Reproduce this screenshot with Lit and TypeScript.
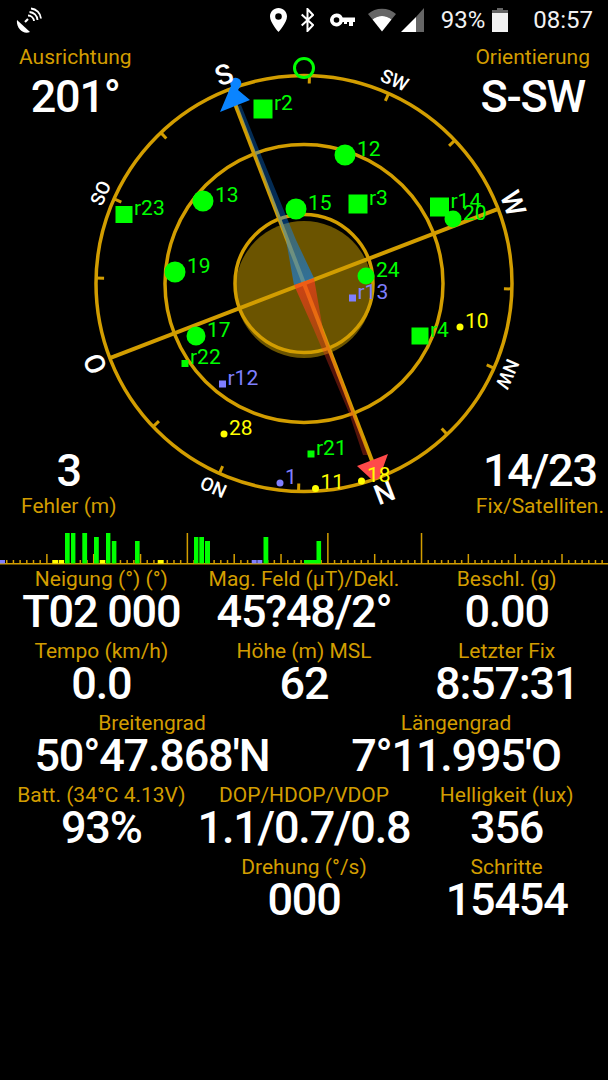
import { LitElement, html, css, svg } from "lit";
import { customElement } from "lit/decorators.js";

const GOLD = "#d29d00";
const GREEN = "#00ff00";
const YELLOW = "#ffff00";
const BLUE = "#7f7fff";
const CX = 304;
const CY = 283.5;
const HEADING = 201;

type Sat = { l: string; x: number; y: number; s: number; c: string; sq?: boolean };
const sats: Sat[] = [
  { l: "12", x: 345, y: 155, s: 10.5, c: GREEN },
  { l: "13", x: 203, y: 201, s: 10.5, c: GREEN },
  { l: "15", x: 296, y: 209, s: 10.5, c: GREEN },
  { l: "19", x: 175, y: 272, s: 10.5, c: GREEN },
  { l: "24", x: 366, y: 276, s: 8.5, c: GREEN },
  { l: "17", x: 196, y: 336, s: 9.5, c: GREEN },
  { l: "r2", x: 263, y: 109, s: 9.5, c: GREEN, sq: true },
  { l: "r3", x: 358, y: 204, s: 9.5, c: GREEN, sq: true },
  { l: "r14", x: 439.5, y: 207, s: 9.5, c: GREEN, sq: true },
  { l: "20", x: 453, y: 219, s: 8.5, c: GREEN },
  { l: "r23", x: 124, y: 214.5, s: 8.5, c: GREEN, sq: true },
  { l: "r4", x: 420, y: 336, s: 8.5, c: GREEN, sq: true },
  { l: "r22", x: 185, y: 363.5, s: 3.5, c: GREEN, sq: true },
  { l: "r21", x: 311, y: 454, s: 3.5, c: GREEN, sq: true },
  { l: "r13", x: 352.5, y: 298, s: 3.5, c: BLUE, sq: true },
  { l: "r12", x: 222.5, y: 384, s: 3.5, c: BLUE, sq: true },
  { l: "28", x: 224, y: 434, s: 3.5, c: YELLOW },
  { l: "10", x: 460, y: 327, s: 3.5, c: YELLOW },
  { l: "11", x: 315.5, y: 488.5, s: 3.5, c: YELLOW },
  { l: "1", x: 280, y: 483, s: 3.5, c: BLUE },
];

const dirs: [string, number, number, number][] = [
  ["S", 180, 28, 214],
  ["W", 270, 28, 214],
  ["N", 360, 28, 214],
  ["O", 90, 28, 214],
  ["SW", 225, 19, 216],
  ["NW", 315, 19, 216],
  ["NO", 45, 19, 216],
  ["SO", 135, 19, 216],
];

const bars: [number, number, string, number][] = [
  [65, 533, GREEN, 4.7], [71, 533, GREEN, 4.4], [82.3, 533, GREEN, 4.8], [94, 537, GREEN, 4.8],
  [106, 533, GREEN, 4.4], [111.8, 541, GREEN, 4.6], [135, 541, GREEN, 4.6], [194, 537, GREEN, 4.4],
  [199.3, 537, GREEN, 4.7], [205, 541, GREEN, 5], [263.5, 537, GREEN, 4.8], [316.5, 541, GREEN, 4.6],
  [0, 560, BLUE, 5], [52.3, 560, YELLOW, 5.7], [58.7, 560, YELLOW, 5.4], [100, 560, YELLOW, 5.3],
  [157.7, 560, YELLOW, 6], [251.7, 560, BLUE, 5], [257.3, 560, BLUE, 5], [304, 560, GREEN, 13],
];

const cells: [string, string, number][] = [
  ["Neigung (°) (°)", "T02 000", 2],
  ["Mag. Feld (µT)/Dekl.", "45?48/2°", 2],
  ["Beschl. (g)", "0.00", 2],
  ["Tempo (km/h)", "0.0", 2],
  ["Höhe (m) MSL", "62", 2],
  ["Letzter Fix", "8:57:31", 2],
  ["Breitengrad", "50°47.868'N", 3],
  ["Längengrad", "7°11.995'O", 3],
  ["Batt. (34°C 4.13V)", "93%", 2],
  ["DOP/HDOP/VDOP", "1.1/0.7/0.8", 2],
  ["Helligkeit (lux)", "356", 2],
];
const lastRow: [string, string][] = [
  ["Drehung (°/s)", "000"],
  ["Schritte", "15454"],
];

@customElement("app-root")
export class AppRoot extends LitElement {
  static styles = css`
    :host { display: block; width: 608px; height: 1080px; background: #000; color: #fff; font-family: Roboto, "Liberation Sans", sans-serif; overflow: hidden; }
    .status { height: 38px; display: flex; align-items: center; padding: 2px 15px 0 16px; box-sizing: border-box; font-size: 24px; color: #f2f2f2; }
    .status svg { display: block; flex: none; }
    .spacer { flex: 1; }
    .ml-pin { margin-right: 14px; }
    .ml-bt { margin-right: 16px; }
    .ml-key { margin-right: 13px; }
    .ml-wifi { margin-right: 5px; }
    .ml-sig { margin-right: 17px; }
    .batt-pct { margin-right: 7px; }
    .ml-batt { margin-right: 25px; }
    .sky { display: grid; height: 492px; grid-template-columns: 1fr 1fr; grid-template-rows: 1fr 1fr; }
    .sky > * { grid-row: 1 / 3; grid-column: 1 / 3; }
    .sky svg.plot { display: block; width: 608px; height: 525px; margin-top: -38px; z-index: 1; }
    .corner { z-index: 2; display: flex; flex-direction: column; align-items: center; width: max-content; }
    .tl { justify-self: start; align-self: start; margin: 7px 0 0 19px; }
    .tr { justify-self: end; align-self: start; margin: 7px 18px 0 0; }
    .tl .val, .tr .val { margin-top: 7px; }
    .bl { justify-self: start; align-self: end; margin: 0 0 12px 21px; }
    .br { justify-self: end; align-self: end; margin: 0 4px 12px 0; }
    .bl .val, .br .val { margin-bottom: 2px; }
    .lbl { font-size: 21px; line-height: 24px; color: #d29d00; white-space: nowrap; }
    .val { font-size: 45px; line-height: 42px; letter-spacing: -1.2px; font-weight: 500; white-space: nowrap; color: #fff; }
    .chart { display: block; width: 608px; height: 36px; }
    .grid { display: grid; grid-template-columns: repeat(6, 1fr); grid-auto-rows: 72px; padding-top: 1px; }
    .cell { display: flex; flex-direction: column; align-items: center; white-space: nowrap; min-width: 0; }
    .s2 { grid-column: span 2; }
    .s3 { grid-column: span 3; }
    .empty { grid-column: span 2; }
    .txt-sat { font-size: 21px; font-family: Roboto, "Liberation Sans", sans-serif; }
  `;

  private pol(bearing: number, r: number): [number, number] {
    const t = ((bearing - HEADING) * Math.PI) / 180;
    return [CX + Math.sin(t) * r, CY - Math.cos(t) * r];
  }

  private plot() {
    const ticks = [];
    for (let i = 0; i < 16; i++) {
      const b = i * 22.5;
      const [x1, y1] = this.pol(b, 209);
      const [x2, y2] = this.pol(b, 200);
      ticks.push(svg`<line x1=${x1} y1=${y1} x2=${x2} y2=${y2} stroke=${GOLD} stroke-width="3"/>`);
    }
    const [sx, sy] = this.pol(180, 208);
    const [nx, ny] = this.pol(0, 208);
    const [wx, wy] = this.pol(270, 208);
    const [ox, oy] = this.pol(90, 208);
    return svg`
      <defs>
        <linearGradient id="gb" gradientUnits="userSpaceOnUse" x1="240" y1="105" x2="304" y2="283">
          <stop offset="0" stop-color="#0a84ff" stop-opacity="0.33"/>
          <stop offset="0.55" stop-color="#0a84ff" stop-opacity="0.33"/>
          <stop offset="1" stop-color="#0a84ff" stop-opacity="0.6"/>
        </linearGradient>
        <linearGradient id="gr" gradientUnits="userSpaceOnUse" x1="365" y1="455" x2="304" y2="283">
          <stop offset="0" stop-color="#ff3a20" stop-opacity="0.33"/>
          <stop offset="0.6" stop-color="#ff3a20" stop-opacity="0.33"/>
          <stop offset="1" stop-color="#ff3a20" stop-opacity="0.65"/>
        </linearGradient>
      </defs>
      <circle cx=${CX} cy="289.5" r="68.5" fill="#6b5400"/>
      <circle cx=${CX} cy=${CY} r="208" fill="none" stroke=${GOLD} stroke-width="3.5"/>
      <circle cx=${CX} cy=${CY} r="139" fill="none" stroke=${GOLD} stroke-width="3.5"/>
      <circle cx=${CX} cy=${CY} r="69" fill="none" stroke=${GOLD} stroke-width="3.5"/>
      ${ticks}
      <line x1=${sx} y1=${sy} x2=${nx} y2=${ny} stroke=${GOLD} stroke-width="4"/>
      <line x1=${wx} y1=${wy} x2=${ox} y2=${oy} stroke=${GOLD} stroke-width="4"/>
      <polygon points="237,106 255,153 286,240 294,285 314,278 296,240 259,150 241,105" fill="url(#gb)"/>
      <polygon points="294,285 314,330 349,413 363,455 368,455 354,413 323,330 314,278" fill="url(#gr)"/>
      <path d="M220 112 L231 86 A5.5 5.5 0 1 1 241 85 L238 90 L250 100 Z" fill="#0a84ff"/>
      <path d="M357 466 L388 454 L380 476 A6.5 6.5 0 0 1 369 477 Z" fill="#ff4a4a"/>
      ${dirs.map(([t, b, fs, r]) => {
        const [x, y] = this.pol(b, r);
        return svg`<text x=${x} y=${y} font-size=${fs} fill="#fff" text-anchor="middle" font-weight="500" transform="rotate(${b - HEADING} ${x} ${y})">${t}</text>`;
      })}
      <circle cx="304" cy="68" r="9.5" fill="none" stroke=${GREEN} stroke-width="3"/>
      ${sats.map((s) => svg`
        ${s.sq
          ? svg`<rect x=${s.x - s.s} y=${s.y - s.s} width=${2 * s.s} height=${2 * s.s} fill=${s.c}/>`
          : svg`<circle cx=${s.x} cy=${s.y} r=${s.s} fill=${s.c}/>`}
        <text class="txt-sat" x=${s.x + s.s + 1.5} y=${s.y + 0.5} fill=${s.c}>${s.l}</text>
      `)}
      <circle cx="361.5" cy="481" r="3.5" fill=${YELLOW}/>
      <text class="txt-sat" x="367" y="482" fill=${YELLOW}>18</text>
    `;
  }

  private chart() {
    const t = [];
    for (let i = 0; i < 91; i++) {
      const x = i * 6.69 - 0.7;
      const tall = i === 28 || i === 49 || i === 63;
      const h = tall ? 30 : i % 7 === 0 && i > 0 ? 9 : 3;
      t.push(svg`<rect x=${x} y=${33 - h} width="1.5" height=${h} fill=${GOLD}/>`);
    }
    return svg`
      <rect x="0" y="33" width="608" height="1.5" fill=${GOLD}/>
      ${t}
      ${bars.map(([x, top, c, w]) => svg`<rect x=${x} y=${top - 530} width=${w} height=${563.5 - top} fill=${c}/>`)}
    `;
  }

  render() {
    return html`
      <div class="status">
        <svg width="26" height="26" viewBox="0 0 26 26" fill="none" stroke="#fff">
          <path d="M1 13 L14 25 C7 28 0 21 1 13Z" fill="#fff" stroke="none"/>
          <path d="M9 15 L12 12" stroke-width="2.2"/>
          <path d="M12 8.500 A6 6 0 0 1 18 14" stroke-width="1.8"/>
          <path d="M13.500 5 A8.500 8.500 0 0 1 21.500 13" stroke-width="1.8"/>
          <path d="M15 1.500 A11 11 0 0 1 25 11.500" stroke-width="1.8"/>
        </svg>
        <div class="spacer"></div>
        <svg class="ml-pin" width="17" height="24" viewBox="0 0 17 24"><path fill-rule="evenodd" fill="#fff" d="M8.500 0 C3.700 0 0 3.700 0 8.500 C0 14.500 8.500 24 8.500 24 S17 14.500 17 8.500 C17 3.700 13.300 0 8.500 0Z M8.500 5.200 A3.300 3.300 0 1 1 8.500 11.800 A3.300 3.300 0 1 1 8.500 5.200Z"/></svg>
        <svg class="ml-bt" width="13" height="24" viewBox="0 0 13 24" fill="none" stroke="#fff" stroke-width="2"><path d="M.7 6.500 L12 17 L6.500 23 V1 L12 7 L.7 17.500"/></svg>
        <svg class="ml-key" width="25" height="14" viewBox="0 0 25 14"><path fill-rule="evenodd" fill="#fff" d="M6.500 .5 A6.500 6.500 0 0 1 12.700 4.500 H25 V9 H23 V13 H19 V9 H17 V11 H14 V9 H12.700 A6.500 6.500 0 1 1 6.500 .5Z M6.500 4.200 A2.800 2.800 0 1 0 6.500 9.800 A2.800 2.800 0 1 0 6.500 4.200Z"/></svg>
        <svg class="ml-wifi" width="28" height="24" viewBox="0 0 28 24"><path d="M0 6 A21 21 0 0 1 28 6 L23.500 11.500 A14.500 14.500 0 0 0 4.500 11.500Z" fill="#666"/><path d="M4.500 11.500 A14.500 14.500 0 0 1 23.500 11.500 L14 23.500Z" fill="#fff"/></svg>
        <svg class="ml-sig" width="23" height="24" viewBox="0 0 23 24"><path d="M0 24 L15 9 V24Z" fill="#fff"/><path d="M15 9 L23 0 V24 H15Z" fill="#666"/></svg>
        <span class="batt-pct">93%</span>
        <svg class="ml-batt" width="16" height="24" viewBox="0 0 16 24"><path d="M5 0 H11 V2 H5Z" fill="#666"/><path d="M0 2 H16 V5 H0Z" fill="#666"/><path d="M0 5 H16 V24 H0Z" fill="#f2f2f2"/></svg>
        <span>08:57</span>
      </div>
      <div class="sky">
        <svg class="plot" viewBox="0 0 608 525">${this.plot()}</svg>
        <div class="corner tl"><span class="lbl">Ausrichtung</span><span class="val">201°</span></div>
        <div class="corner tr"><span class="lbl">Orientierung</span><span class="val">S-SW</span></div>
        <div class="corner bl"><span class="val">3</span><span class="lbl">Fehler (m)</span></div>
        <div class="corner br"><span class="val">14/23</span><span class="lbl">Fix/Satelliten.</span></div>
      </div>
      <svg class="chart" viewBox="0 0 608 36">${this.chart()}</svg>
      <div class="grid">
        ${cells.map(
          ([l, v, s]) => html`<div class="cell ${s === 3 ? "s3" : "s2"}"><span class="lbl">${l}</span><span class="val">${v}</span></div>`
        )}
        <div class="empty"></div>
        ${lastRow.map(
          ([l, v]) => html`<div class="cell s2"><span class="lbl">${l}</span><span class="val">${v}</span></div>`
        )}
      </div>
    `;
  }
}
